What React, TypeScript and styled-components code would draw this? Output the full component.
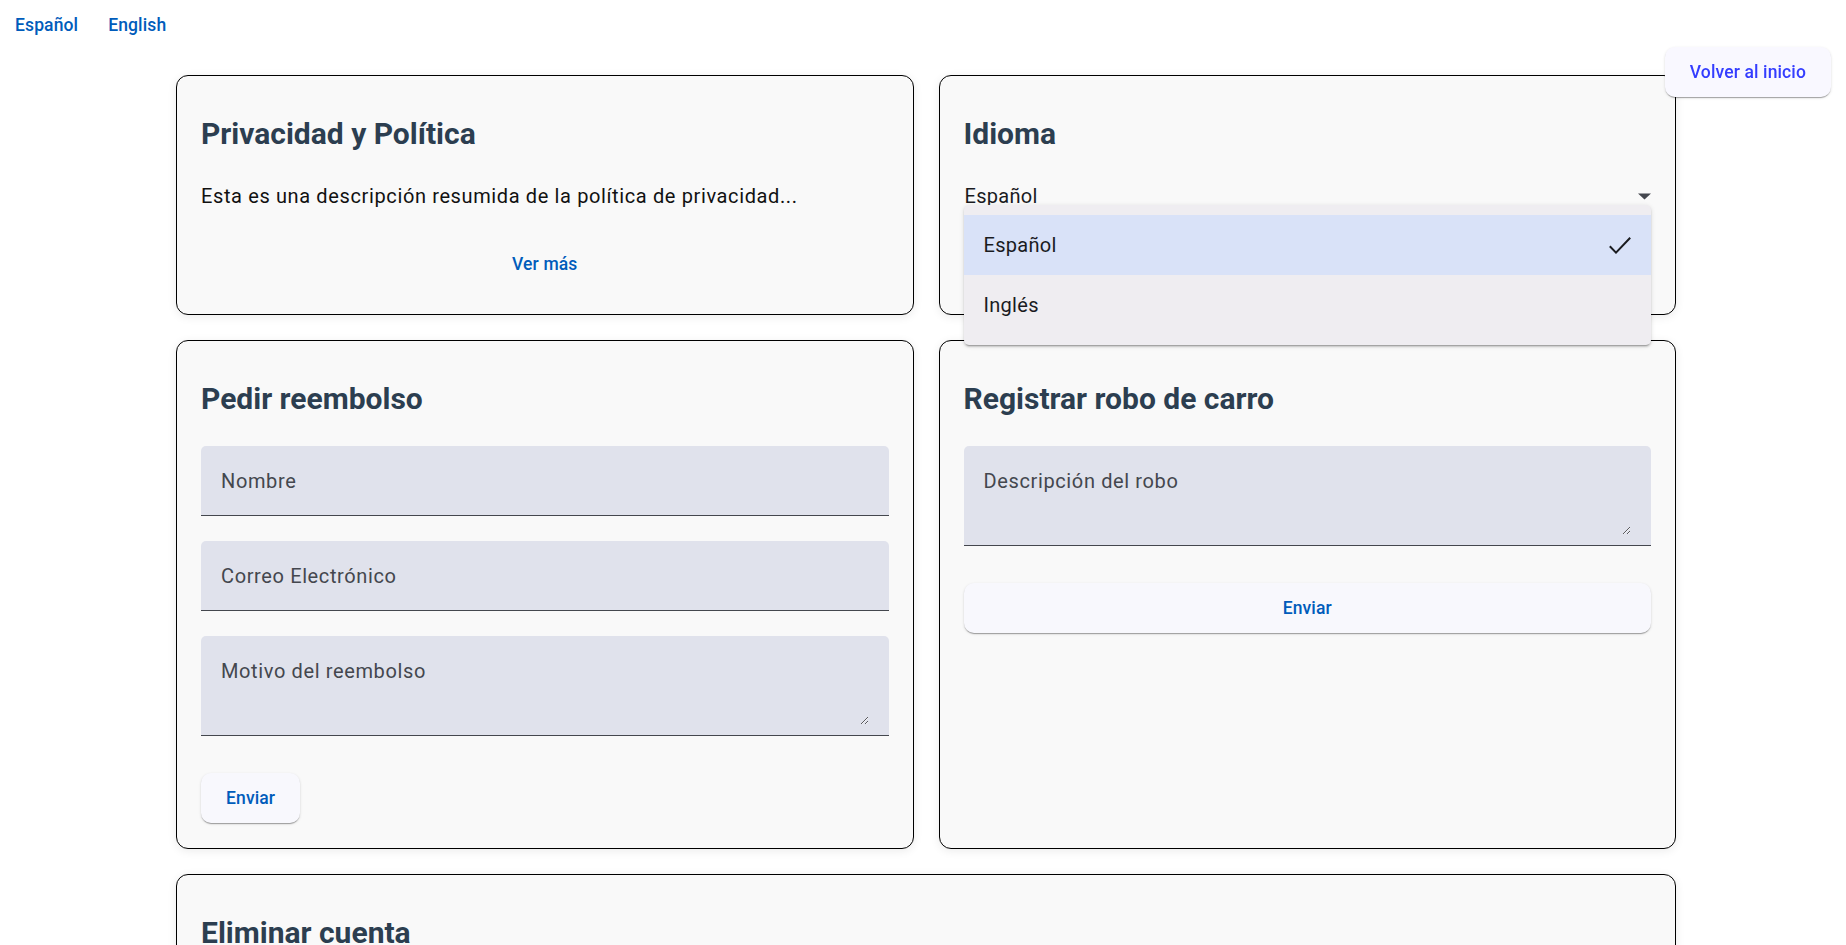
import React from "react";
import styled, { createGlobalStyle, css } from "styled-components";

const GlobalStyle = createGlobalStyle`
  html, body {
    margin: 0;
    padding: 0;
    background: #ffffff;
    font-family: Roboto, "Noto Sans", "Liberation Sans", sans-serif;
  }
  * { box-sizing: border-box; }
`;

const TopBar = styled.nav`
  display: flex;
  align-items: center;
  height: 50px;
`;

const LangLink = styled.button`
  height: 50px;
  padding: 0 15px;
  border: none;
  background: transparent;
  font-family: Roboto, sans-serif;
  font-weight: 500;
  font-size: 17.5px;
  letter-spacing: 0.125px;
  color: #005cbb;
  cursor: pointer;
`;

const elevated = css`
  height: 50px;
  padding: 0 25px;
  border: none;
  border-radius: 10px;
  background: #f8f8fd;
  font-family: Roboto, sans-serif;
  font-weight: 500;
  font-size: 17.5px;
  letter-spacing: 0.125px;
  box-shadow: 0 2px 1px -1px rgba(0, 0, 0, 0.2), 0 1px 1px 0 rgba(0, 0, 0, 0.14),
    0 1px 3px 0 rgba(0, 0, 0, 0.12);
  cursor: pointer;
`;

const HomeButton = styled.button`
  ${elevated};
  position: fixed;
  top: 47px;
  right: 15px;
  z-index: 20;
  background: #f9f8ff;
  color: #343dff;
`;

const SubmitButton = styled.button<{ $block?: boolean }>`
  ${elevated};
  color: #005cbb;
  margin-top: 12px;
  align-self: ${(p) => (p.$block ? "stretch" : "flex-start")};
`;

const Grid = styled.main`
  display: grid;
  grid-template-columns: 1fr 1fr;
  gap: 25px;
  width: 1500px;
  margin: 25px 0 0 176px;
  padding-bottom: 40px;
`;

const Card = styled.section<{ $wide?: boolean }>`
  display: flex;
  flex-direction: column;
  background: #f9f9f9;
  border: 1px solid #000;
  border-radius: 12px;
  padding: 24px 24px 25px;
  box-shadow: 0 2px 10px rgba(0, 0, 0, 0.08);
  ${(p) => p.$wide && "grid-column: 1 / -1;"}
`;

const CardTitle = styled.h2`
  margin: 16px 0 29px;
  font-family: Roboto, sans-serif;
  font-weight: 700;
  font-size: 30px;
  line-height: 36px;
  color: #2c3e50;
`;

const CardText = styled.p`
  margin: 0 0 28px;
  font-size: 20px;
  line-height: 30px;
  letter-spacing: 0.625px;
  color: #111;
`;

const TextButton = styled.button`
  align-self: center;
  height: 50px;
  padding: 0 15px;
  border: none;
  background: transparent;
  font-family: Roboto, sans-serif;
  font-weight: 500;
  font-size: 17.5px;
  letter-spacing: 0.125px;
  color: #005cbb;
  cursor: pointer;
`;

const Form = styled.form`
  display: flex;
  flex-direction: column;
`;

const Field = styled.label<{ $tall?: boolean }>`
  display: block;
  height: ${(p) => (p.$tall ? "100px" : "70px")};
  padding: 20px 20px 0;
  margin-bottom: 25px;
  background: #e0e2ec;
  border-radius: 5px 5px 0 0;
  border-bottom: 1px solid #44474e;
`;

const fieldText = css`
  display: block;
  width: 100%;
  padding: 0;
  border: none;
  outline: none;
  background: transparent;
  font-family: Roboto, sans-serif;
  font-size: 20px;
  line-height: 30px;
  letter-spacing: 0.625px;
  color: #1a1b1f;
  &::placeholder {
    color: #44474e;
    opacity: 1;
  }
`;

const FieldInput = styled.input`
  ${fieldText};
  height: 30px;
`;

const FieldArea = styled.textarea`
  ${fieldText};
  height: 69px;
  resize: vertical;
`;

const SelectWrap = styled.div`
  position: relative;
`;

const SelectTrigger = styled.div`
  display: flex;
  align-items: center;
  justify-content: space-between;
  height: 30px;
  padding-left: 1px;
  font-size: 20px;
  letter-spacing: 0.3px;
  color: #1a1b1f;
`;

const Panel = styled.div`
  position: absolute;
  top: 24px;
  left: 0;
  right: 0;
  z-index: 10;
  padding: 10px 0;
  background: #efedf1;
  border-radius: 5px;
  box-shadow: 0 3px 1px -2px rgba(0, 0, 0, 0.2), 0 2px 2px 0 rgba(0, 0, 0, 0.14),
    0 1px 5px 0 rgba(0, 0, 0, 0.12);
`;

const Option = styled.div<{ $selected?: boolean }>`
  display: flex;
  align-items: center;
  justify-content: space-between;
  height: 60px;
  padding: 0 20px;
  font-size: 20px;
  letter-spacing: 0.3px;
  color: #1a1b1f;
  background: ${(p) => (p.$selected ? "#d9e2f8" : "transparent")};
`;

const Arrow = () => (
  <svg width="13" height="7" viewBox="0 0 13 7" aria-hidden="true">
    <path d="M0 0.5 L13 0.5 L6.5 6.5 Z" fill="#44474e" />
  </svg>
);

const Check = () => (
  <svg width="22" height="17" viewBox="0 0 22 17" aria-hidden="true">
    <polyline
      points="0.8,9.3 7,15.6 21.2,0.8"
      fill="none"
      stroke="#1a1b1f"
      strokeWidth="2"
    />
  </svg>
);

export default function App() {
  return (
    <>
      <GlobalStyle />
      <TopBar>
        <LangLink>Español</LangLink>
        <LangLink>English</LangLink>
      </TopBar>
      <HomeButton>Volver al inicio</HomeButton>
      <Grid>
        <Card>
          <CardTitle>Privacidad y Política</CardTitle>
          <CardText>
            Esta es una descripción resumida de la política de privacidad...
          </CardText>
          <TextButton>Ver más</TextButton>
        </Card>
        <Card>
          <CardTitle>Idioma</CardTitle>
          <SelectWrap>
            <SelectTrigger>
              <span>Español</span>
              <Arrow />
            </SelectTrigger>
            <Panel>
              <Option $selected>
                <span>Español</span>
                <Check />
              </Option>
              <Option>
                <span>Inglés</span>
              </Option>
            </Panel>
          </SelectWrap>
        </Card>
        <Card>
          <CardTitle>Pedir reembolso</CardTitle>
          <Form onSubmit={(e) => e.preventDefault()}>
            <Field>
              <FieldInput placeholder="Nombre" />
            </Field>
            <Field>
              <FieldInput placeholder="Correo Electrónico" />
            </Field>
            <Field $tall>
              <FieldArea placeholder="Motivo del reembolso" />
            </Field>
            <SubmitButton type="submit">Enviar</SubmitButton>
          </Form>
        </Card>
        <Card>
          <CardTitle>Registrar robo de carro</CardTitle>
          <Form onSubmit={(e) => e.preventDefault()}>
            <Field $tall>
              <FieldArea placeholder="Descripción del robo" />
            </Field>
            <SubmitButton type="submit" $block>
              Enviar
            </SubmitButton>
          </Form>
        </Card>
        <Card $wide>
          <CardTitle>Eliminar cuenta</CardTitle>
          <CardText>
            Esta acción eliminará tu cuenta y todos tus datos de forma permanente.
          </CardText>
          <SubmitButton>Eliminar cuenta</SubmitButton>
        </Card>
      </Grid>
    </>
  );
}
